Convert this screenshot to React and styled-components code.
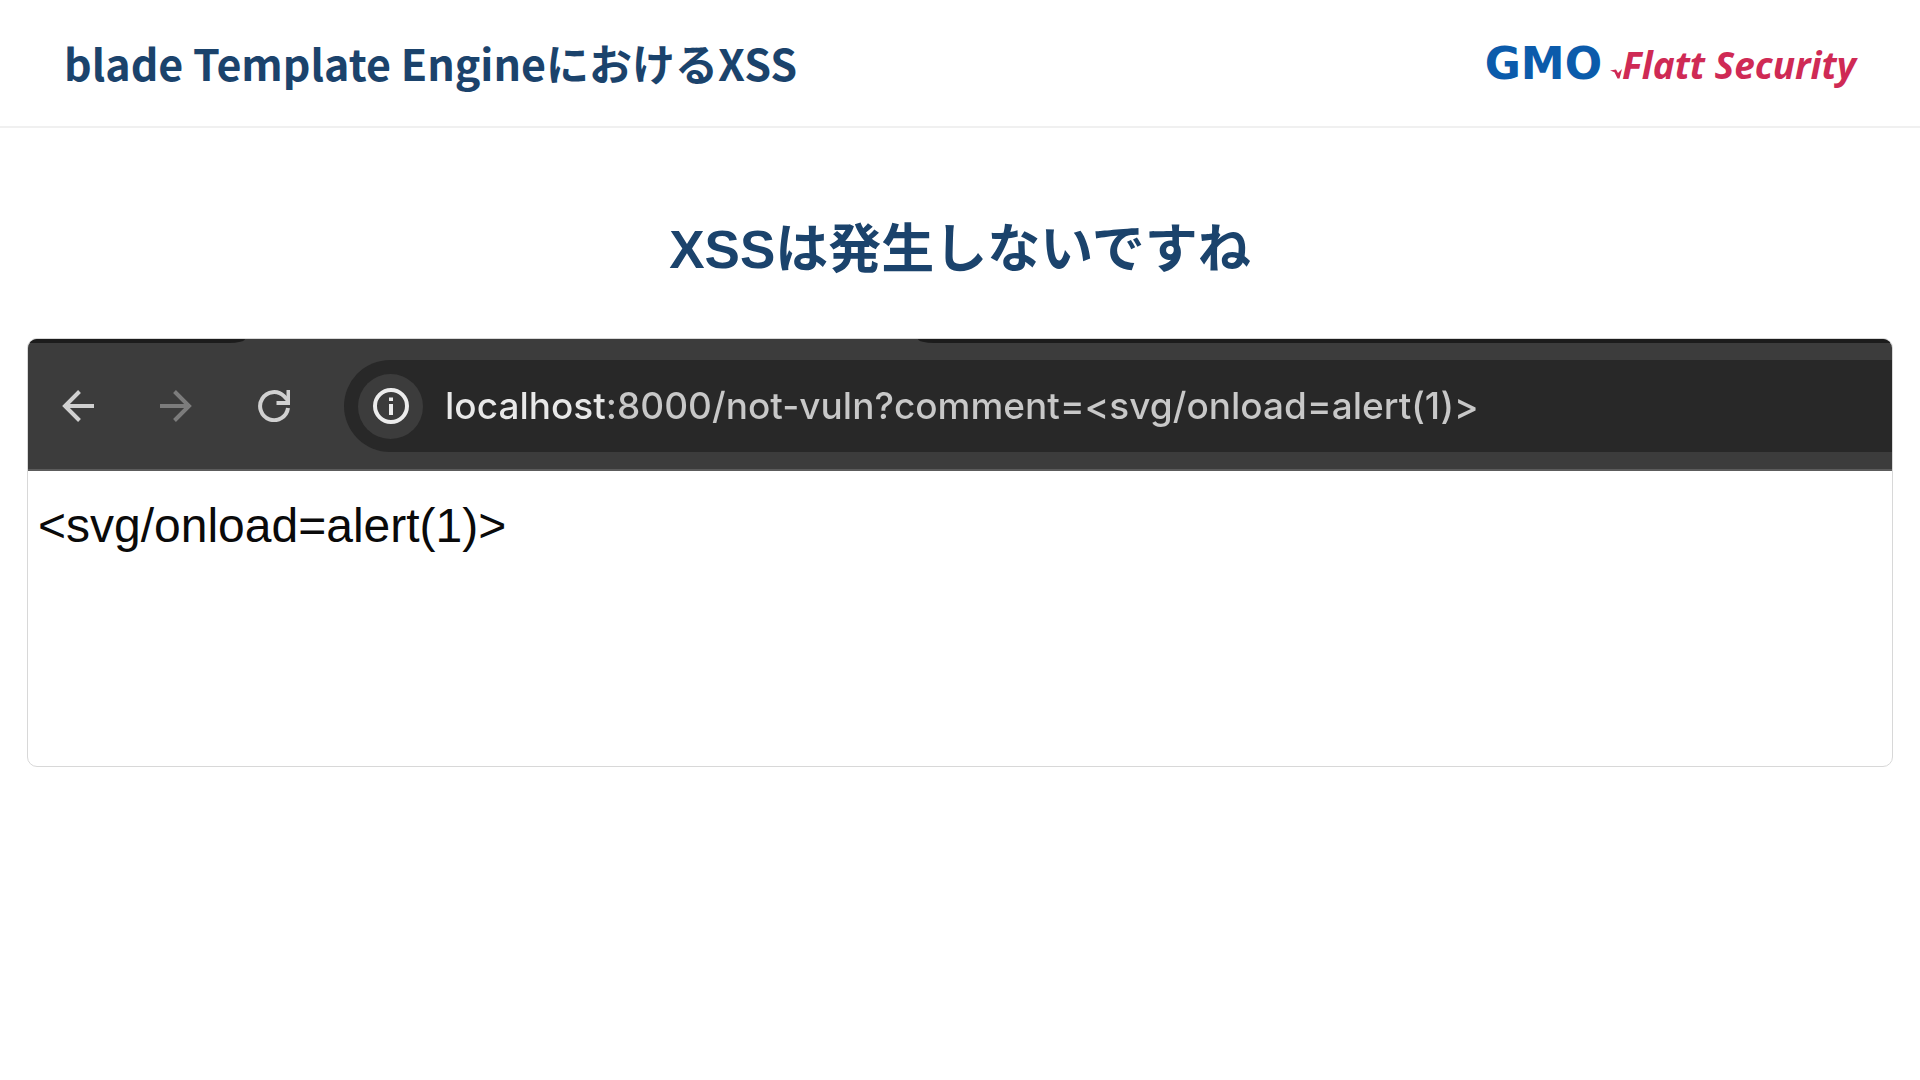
import React from "react";
import styled, { createGlobalStyle } from "styled-components";

const App = () => {
  return (
    <>
      <GlobalStyle />
      <Header>
        <Title>blade Template EngineにおけるXSS</Title>
        <Logo>
          <LogoGroup>GMO</LogoGroup>
          <LogoTick viewBox="0 0 12 10" aria-hidden="true">
            <path d="M0 1.5 L6 0.5 L8 4 L12 0 L9.5 9.5 L7.5 9.5 L4.5 3.2 Z" />
          </LogoTick>
          <LogoName>Flatt Security</LogoName>
        </Logo>
      </Header>
      <Main>
        <Lead>XSSは発生しないですね</Lead>
        <Browser>
          <TabStrip>
            <TabGap $grow={217} $side="right" />
            <ActiveTab />
            <TabGap $grow={974} $side="left" />
          </TabStrip>
          <Toolbar>
            <NavButton aria-label="Back" $color="#d0d0d0">
              <svg viewBox="0 0 32 32">
                <path d="M32 16H3M17.5 1.5L3 16l14.5 14.5" />
              </svg>
            </NavButton>
            <NavButton aria-label="Forward" $color="#7c7c7c" disabled>
              <svg viewBox="0 0 32 32">
                <path d="M0 16h29M14.5 1.5L29 16 14.5 30.5" />
              </svg>
            </NavButton>
            <NavButton aria-label="Reload" $color="#d0d0d0">
              <svg viewBox="0 0 32 32">
                <path d="M30 18A14 14 0 1 1 26 6.2L30.5 11" />
                <path d="M18.5 13h12V0" />
              </svg>
            </NavButton>
            <AddressBar>
              <InfoButton aria-label="Site information">
                <svg viewBox="0 0 36 36">
                  <circle cx="18" cy="18" r="16" />
                  <path d="M18 16v11M18 9.5v3.5" />
                </svg>
              </InfoButton>
              <Address
                aria-label="Address"
                spellCheck="false"
                defaultValue="localhost:8000/not-vuln?comment=<svg/onload=alert(1)>"
              />
            </AddressBar>
          </Toolbar>
          <Page>{"<svg/onload=alert(1)>"}</Page>
        </Browser>
      </Main>
    </>
  );
};

const GlobalStyle = createGlobalStyle`
  * {
    box-sizing: border-box;
  }

  body {
    margin: 0;
    background: #fff;
    font-family: "Noto Sans CJK JP", sans-serif;
  }

  h1, h2, p {
    margin: 0;
  }
`;

const Header = styled.header`
  display: flex;
  align-items: center;
  justify-content: space-between;
  height: 128px;
  padding: 0 64px;
  border-bottom: 2px solid #f0f0f0;
`;

const Title = styled.h1`
  padding-bottom: 2px;
  color: #1b436c;
  font-size: 43px;
  font-weight: 700;
  line-height: 64px;
`;

const Logo = styled.div`
  display: flex;
  align-items: baseline;
  padding-top: 2px;
  line-height: 48px;
`;

const LogoGroup = styled.span`
  color: #0b5bab;
  font-family: "DejaVu Sans", sans-serif;
  font-size: 44px;
  font-weight: 700;
`;

const LogoTick = styled.svg`
  width: 12px;
  height: 10px;
  margin-left: 8px;
  fill: #cf2a55;
`;

const LogoName = styled.span`
  color: #cf2a55;
  font-family: "Open Sans", sans-serif;
  font-size: 37px;
  font-style: italic;
  font-weight: 700;
`;

const Main = styled.main`
  padding: 82px 27px;
`;

const Lead = styled.h2`
  color: #1b436c;
  font-family: "Liberation Sans", "Noto Sans CJK JP", sans-serif;
  font-size: 53px;
  font-weight: 700;
  line-height: 80px;
  text-align: center;
`;

const Browser = styled.section`
  margin-top: 48px;
  overflow: hidden;
  border: 1px solid #d8d8d8;
  border-radius: 10px;
`;

const TabStrip = styled.div`
  display: flex;
  height: 4px;
  background: #3c3c3c;
`;

const TabGap = styled.div`
  flex: ${(props) => props.$grow};
  background: #1c1c1c;
  border-bottom-${(props) => props.$side}-radius: 16px 4px;
`;

const ActiveTab = styled.div`
  flex: 673;
`;

const Toolbar = styled.div`
  display: flex;
  align-items: center;
  height: 128px;
  padding-left: 1px;
  background: #3c3c3c;
  border-bottom: 2px solid #5c5c5c;
`;

const NavButton = styled.button`
  display: flex;
  align-items: center;
  justify-content: center;
  width: 98px;
  height: 64px;
  padding: 0;
  border: 0;
  background: none;

  svg {
    width: 32px;
    height: 32px;
    fill: none;
    stroke: ${(props) => props.$color};
    stroke-width: 4;
  }
`;

const AddressBar = styled.div`
  display: flex;
  flex: 1;
  align-items: center;
  gap: 22px;
  height: 92px;
  margin-left: 21px;
  padding-left: 14px;
  border-radius: 46px 0 0 46px;
  background: #282828;
`;

const InfoButton = styled.button`
  display: flex;
  align-items: center;
  justify-content: center;
  width: 65px;
  height: 65px;
  padding: 0;
  border: 0;
  border-radius: 50%;
  background: #3c3c3c;

  svg {
    width: 36px;
    height: 36px;
    fill: none;
    stroke: #ececec;
    stroke-width: 4;
  }
`;

/* the host part is brighter than the port, path and query */
const Address = styled.input`
  flex: 1;
  min-width: 0;
  height: 64px;
  padding: 0 0 2px;
  border: 0;
  outline: 0;
  background: linear-gradient(to right, #e8e8e8 164px, #c8c8c8 164px);
  background-clip: text;
  color: transparent;
  font-family: Inter, sans-serif;
  font-size: 37px;
  font-weight: 500;
`;

const Page = styled.p`
  height: 295px;
  padding: 23px 10px;
  color: #0a0a0a;
  font-family: "Liberation Sans", sans-serif;
  font-size: 48px;
  line-height: 64px;
`;

export default App;
